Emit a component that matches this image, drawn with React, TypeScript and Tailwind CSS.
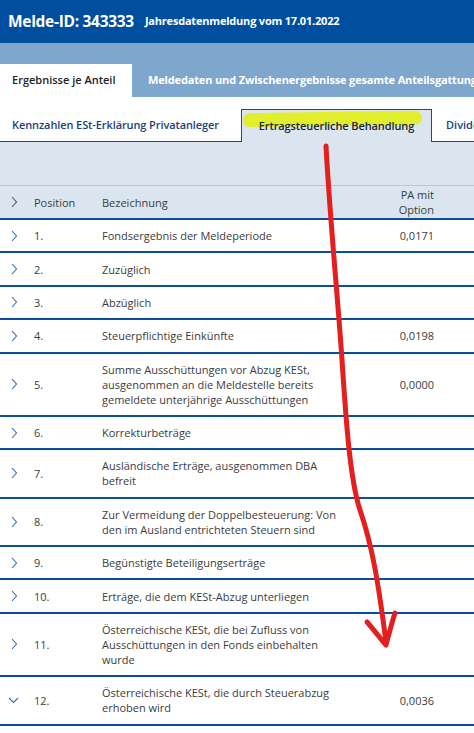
import React from "react";

const rows: { pos: string; text: string; value?: string; open?: boolean }[] = [
  { pos: "1.", text: "Fondsergebnis der Meldeperiode", value: "0,0171" },
  { pos: "2.", text: "Zuzüglich" },
  { pos: "3.", text: "Abzüglich" },
  { pos: "4.", text: "Steuerpflichtige Einkünfte", value: "0,0198" },
  {
    pos: "5.",
    text: "Summe Ausschüttungen vor Abzug KESt, ausgenommen an die Meldestelle bereits gemeldete unterjährige Ausschüttungen",
    value: "0,0000",
  },
  { pos: "6.", text: "Korrekturbeträge" },
  { pos: "7.", text: "Ausländische Erträge, ausgenommen DBA befreit" },
  { pos: "8.", text: "Zur Vermeidung der Doppelbesteuerung: Von den im Ausland entrichteten Steuern sind" },
  { pos: "9.", text: "Begünstigte Beteiligungserträge" },
  { pos: "10.", text: "Erträge, die dem KESt-Abzug unterliegen" },
  { pos: "11.", text: "Österreichische KESt, die bei Zufluss von Ausschüttungen in den Fonds einbehalten wurde" },
  { pos: "12.", text: "Österreichische KESt, die durch Steuerabzug erhoben wird", value: "0,0036", open: true },
];

function Chevron({ color, down }: { color: string; down?: boolean }) {
  if (down) {
    return (
      <svg width="11" height="7" viewBox="0 0 11 7" fill="none">
        <polyline points="1,1 5.5,5.5 10,1" stroke={color} strokeWidth="1.1" />
      </svg>
    );
  }
  return (
    <svg width="7" height="12" viewBox="0 0 7 12" fill="none">
      <polyline points="1,1 5.5,6 1,11" stroke={color} strokeWidth="1.1" />
    </svg>
  );
}

export default function App() {
  return (
    <div
      className="relative w-[474px] h-[733px] overflow-hidden bg-white"
      style={{ fontFamily: "'Open Sans', 'Liberation Sans', sans-serif" }}
    >
      {/* Top header */}
      <div className="h-[43px] bg-[#004f9f] flex items-center pl-[8px] gap-[11px] whitespace-nowrap">
        <span className="text-white font-bold text-[15.5px] tracking-[-0.3px]">Melde-ID: 343333</span>
        <span className="text-white font-bold text-[11px] tracking-[-0.2px]">Jahresdatenmeldung vom 17.01.2022</span>
      </div>
      {/* Light band with tabs */}
      <div className="h-[54px] bg-[#7fa6cd] flex items-end whitespace-nowrap">
        <div className="h-[33px] w-[132px] shrink-0 bg-white flex items-center pl-[12px] text-[11px] font-semibold text-[#222]">
          Ergebnisse je Anteil
        </div>
        <div className="h-[33px] flex items-center pl-[16px] text-[11px] font-bold text-white tracking-[-0.15px]">
          Meldedaten und Zwischenergebnisse gesamte Anteilsgattung
        </div>
      </div>
      {/* Sub tabs */}
      <div className="h-[45px] flex items-end whitespace-nowrap">
        <div className="h-[33px] w-[241px] shrink-0 border-b border-[#0d4e9a] flex items-center pl-[12px] text-[11px] font-semibold text-[#1b3f7c] tracking-[-0.1px]">
          Kennzahlen ESt-Erklärung Privatanleger
        </div>
        <div className="relative h-[33px] w-[191px] shrink-0 bg-[#dae5f0] border border-b-0 border-[#0d4e9a] flex items-center justify-center">
          <div className="absolute left-[1px] top-[2px] w-[179px] h-[14px] bg-[#e1ee2e] rounded-[7px] rotate-[-0.8deg]" />
          <span className="relative text-[11px] font-semibold text-[#222] tracking-[-0.1px]">Ertragsteuerliche Behandlung</span>
        </div>
        <div className="h-[33px] flex-1 border-b border-[#0d4e9a] flex items-center pl-[14px] text-[11px] font-semibold text-[#1b3f7c]">
          Dividenden
        </div>
      </div>
      {/* Table area */}
      <div className="bg-[#dae5f0] h-[44px] border-b border-[#c4c4c4]" />
      <div className="text-[11px] leading-[15px] text-[#3c3c3c]">
        <div className="grid grid-cols-[34px_68px_243px_89px_1fr] items-center bg-[#dae5f0] border-b-2 border-[#0d4e9a] h-[34px]">
          <div className="flex pl-[11px]">
            <Chevron color="#555" />
          </div>
          <div>Position</div>
          <div>Bezeichnung</div>
          <div className="text-right">
            PA mit
            <br />
            Option
          </div>
          <div />
        </div>
        {rows.map((r) => (
          <div
            key={r.pos}
            className="grid grid-cols-[34px_68px_243px_89px_1fr] items-center border-b-2 border-[#0d4e9a] py-[8.2px] min-h-[33px]"
          >
            <div className={r.open ? "flex pl-[8px]" : "flex pl-[11px]"}>
              <Chevron color="#2a6fbf" down={r.open} />
            </div>
            <div>{r.pos}</div>
            <div className="pr-[2px]">{r.text}</div>
            <div className="text-right">{r.value ?? ""}</div>
            <div />
          </div>
        ))}
      </div>
      {/* Red hand-drawn arrow */}
      <svg
        className="absolute left-0 top-0 pointer-events-none"
        width="474"
        height="733"
        viewBox="0 0 474 733"
        fill="none"
      >
        <path
          d="M326 146 C330 220, 338 300, 342 360 C346 420, 350 480, 360 510 C372 545, 378 580, 386 642"
          stroke="#e41f1f"
          strokeWidth="5"
          strokeLinecap="round"
        />
        <path
          d="M367 622 C374 630, 380 638, 386 645 C389 634, 392 622, 395 613"
          stroke="#e41f1f"
          strokeWidth="5"
          strokeLinecap="round"
          strokeLinejoin="round"
        />
      </svg>
    </div>
  );
}
